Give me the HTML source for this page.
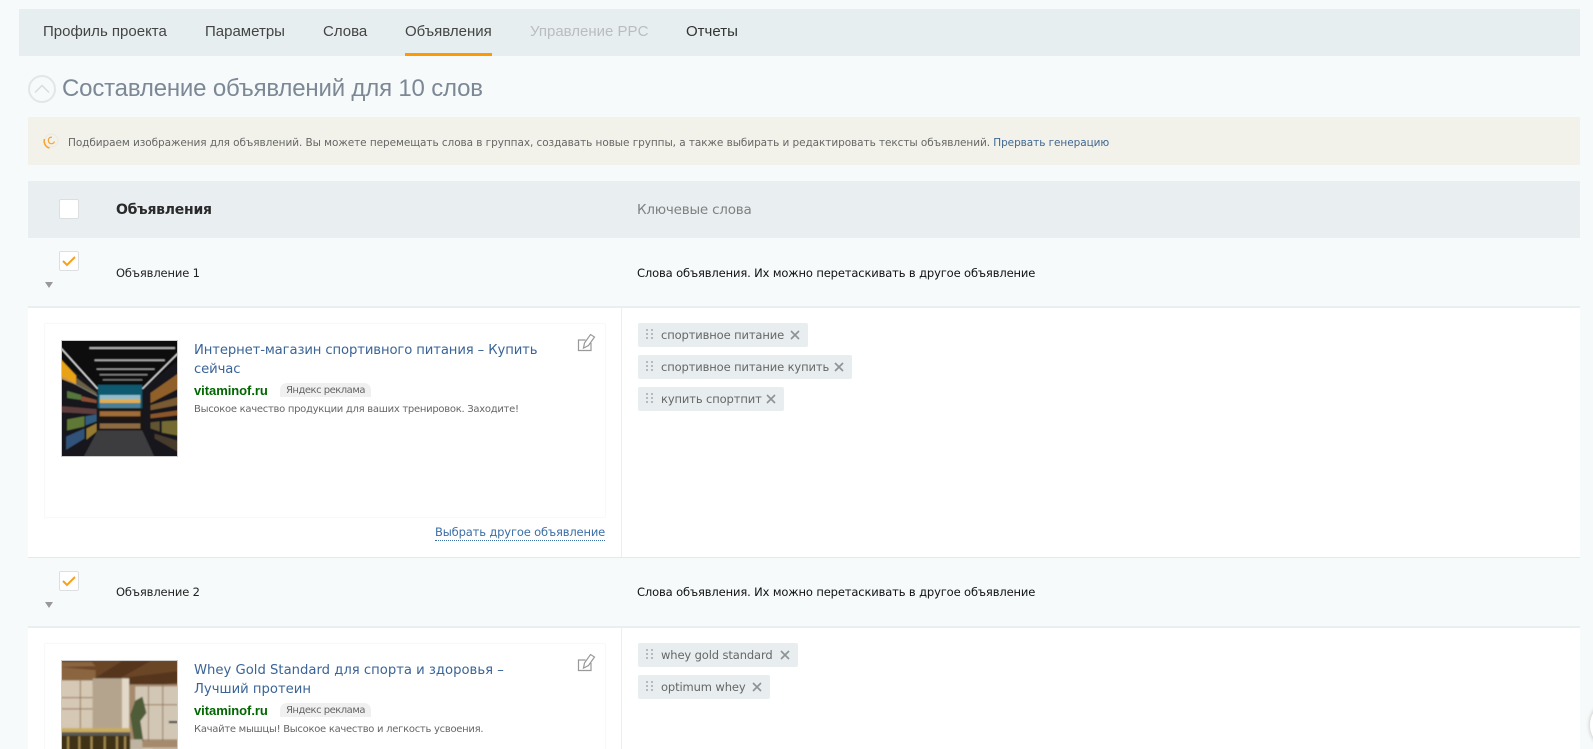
<!DOCTYPE html>
<html lang="ru"><head><meta charset="utf-8"><title>Объявления</title>
<style>
html,body{margin:0;padding:0;width:1593px;height:749px;overflow:hidden;background:#f6fafb}
body{position:relative;font-family:"DejaVu Sans",sans-serif}
.a{position:absolute;white-space:nowrap}
.box{position:absolute}
.nav{font:15px/20px "Liberation Sans",sans-serif;color:#444;top:22px}
.cb{position:absolute;left:59px;width:18px;height:18px;background:#fff;border:1px solid #dcdfe1;border-radius:2px}
.tri{position:absolute;left:45px;width:0;height:0;border-left:4px solid transparent;border-right:4px solid transparent;border-top:6px solid #999}
.tag{position:absolute;left:638px;height:24px;background:#e8eeef;border-radius:2px;font-size:11.5px;line-height:25px;color:#666;letter-spacing:-.12px}
.tag span{position:absolute;left:23px;white-space:nowrap}
.tag svg{position:absolute;left:8px;top:6px}
.tag svg.x{left:auto;right:8px;top:7px}
.t{font-size:13.2px;line-height:19px;color:#3a6496;left:194px;letter-spacing:-.11px}
.dom{font:bold 13px/14px "Liberation Sans",sans-serif;color:#060;left:194px;letter-spacing:-.05px}
.badge{position:absolute;left:280px;width:91px;height:14px;background:#f0f0f0;border-radius:7px 7px 0 0;font-size:10px;line-height:15px;color:#666;text-align:center;letter-spacing:-.5px;overflow:hidden}
.d{font-size:10px;line-height:13px;color:#666;left:194px;letter-spacing:-.28px}
.rowt{font-size:11.5px;line-height:14px;color:#222;letter-spacing:-.13px}
</style></head><body>

<div class="box" style="left:19px;top:9px;width:1561px;height:47px;background:#e7eeef"></div>
<div class="a nav" style="left:43px">Профиль проекта</div>
<div class="a nav" style="left:205px">Параметры</div>
<div class="a nav" style="left:323px">Слова</div>
<div class="a nav" style="left:405px">Объявления</div>
<div class="box" style="left:405px;top:53px;width:87px;height:3px;background:#f90"></div>
<div class="a nav" style="left:530px;color:#b9bdbf">Управление PPC</div>
<div class="a nav" style="left:686px;color:#333">Отчеты</div>

<svg class="box" style="left:28px;top:75px" width="28" height="28" viewBox="0 0 28 28"><circle cx="14" cy="14" r="13" fill="none" stroke="#e3e6e8" stroke-width="2"/><path d="M7 17.500 14 10.500 21 17.500" fill="none" stroke="#d9dcde" stroke-width="1.500"/></svg>
<div class="a" style="left:62px;top:74px;font:24px/30px 'Liberation Sans',sans-serif;color:#7d8895;letter-spacing:-.18px">Составление объявлений для 10 слов</div>

<div class="box" style="left:28px;top:117px;width:1552px;height:48px;background:#f3f2ea"></div>
<svg class="box" style="left:43px;top:133px" width="16" height="16" viewBox="0 0 16 16"><circle cx="8.500" cy="7.500" r="6.500" fill="none" stroke="#eceae2" stroke-width="1.200"/><path d="M1.500 6A7 7 0 0 0 6.500 15" fill="none" stroke="#f9a22e" stroke-width="1.500"/><circle cx="8.500" cy="7.500" r="3.200" fill="none" stroke="#f9a22e" stroke-width="1.200" stroke-dasharray="14 6" transform="rotate(20 8.500 7.500)"/></svg>
<div class="a" style="left:68px;top:136px;font-size:10.5px;line-height:14px;color:#666;letter-spacing:-.07px">Подбираем изображения для объявлений. Вы можете перемещать слова в группах, создавать новые группы, а также выбирать и редактировать тексты объявлений. <span style="color:#3f6790">Прервать генерацию</span></div>

<!-- table -->
<div class="box" style="left:28px;top:181px;width:1552px;height:57px;background:#e9eef0"></div>
<div class="cb" style="top:199px"></div>
<div class="a" style="left:116px;top:201px;font-size:14px;font-weight:bold;line-height:18px;color:#2a2a2a;letter-spacing:-.25px">Объявления</div>
<div class="a" style="left:637px;top:201px;font-size:13.5px;line-height:18px;color:#808080;letter-spacing:-.22px">Ключевые слова</div>

<div class="box" style="left:28px;top:308px;width:1552px;height:249px;background:#fff"></div>
<div class="box" style="left:28px;top:306px;width:1552px;height:2px;background:#e9eef0"></div>
<div class="box" style="left:621px;top:308px;width:1px;height:249px;background:#e9eef0"></div>
<div class="box" style="left:28px;top:557px;width:1552px;height:1px;background:#e4eaec"></div>
<div class="box" style="left:28px;top:628px;width:1552px;height:121px;background:#fff"></div>
<div class="box" style="left:28px;top:626px;width:1552px;height:2px;background:#e9eef0"></div>
<div class="box" style="left:621px;top:628px;width:1px;height:121px;background:#e9eef0"></div>

<!-- row 1 -->
<div class="cb" style="top:251px"><svg width="18" height="18" viewBox="0 0 18 18" style="display:block"><path d="M3 9 7 13 15 5" fill="none" stroke="#f9a01b" stroke-width="2"/></svg></div>
<div class="tri" style="top:282px"></div>
<div class="a rowt" style="left:116px;top:266px">Объявление 1</div>
<div class="a rowt" style="left:637px;top:266px;color:#111">Слова объявления. Их можно перетаскивать в другое объявление</div>

<div class="box" style="left:44px;top:323px;width:560px;height:193px;border:1px solid #f8f8f8;border-radius:2px;background:#fff"></div>
<svg class="box" style="left:61px;top:340px;outline:1px solid #ccc;outline-offset:-1px" width="117" height="117" viewBox="0 0 115 115">
<defs><filter id="b1" x="0" y="0" width="100%" height="100%"><feGaussianBlur stdDeviation=".6"/></filter></defs>
<g filter="url(#b1)">
<rect width="115" height="115" fill="#08090c"/>
<rect x="36" y="44" width="44" height="24" fill="#0b5a70"/>
<rect x="38" y="54" width="40" height="4" fill="#8fbccb"/><rect x="38" y="58" width="40" height="4" fill="#e0ad55"/><rect x="38" y="62" width="40" height="5" fill="#4c7f98"/>
<rect x="36" y="67" width="44" height="22" fill="#1a1412"/><rect x="38" y="70" width="40" height="5" fill="#a06c38"/><rect x="38" y="82" width="40" height="5" fill="#8c6a42"/>
<path d="M36 89H80L92 115H22Z" fill="#3c3d40"/>
<path d="M0 20 36 48V89L22 115H0Z" fill="#14151a"/>
<path d="M115 20 80 48V89L92 115H115Z" fill="#14151a"/>
<path d="M0 19 15 35V44L0 38Z" fill="#e9a117"/>
<g opacity=".72">
<path d="M15 37 35 52V55L15 44Z" fill="#8a7b52"/>
<path d="M6 50 20 54V59L6 57Z" fill="#6e9c4b"/><path d="M20 55 35 59V62L20 60Z" fill="#b9683f"/>
<path d="M0 65 35 68V73L0 71Z" fill="#7b4f4a"/>
<path d="M6 78 23 75V85L6 89Z" fill="#7d9f3e"/><path d="M24 75 35 73V80L24 84Z" fill="#3f79a6"/>
<path d="M5 95 23 87V97L5 108Z" fill="#3d6a9e"/><path d="M25 87 35 82V90L25 98Z" fill="#c9a13a"/>
<path d="M115 33 88 52V62L115 48Z" fill="#c27f33"/>
<path d="M115 56 88 64V69L115 64Z" fill="#a0753a"/>
<path d="M115 69 88 73V77L115 74Z" fill="#b96f2f"/>
<path d="M115 79 99 80V91L115 94Z" fill="#9a8c3a"/><path d="M97 80 88 81V87L97 90Z" fill="#7f6d3c"/>
<path d="M115 99 92 92V97L115 110Z" fill="#5b4a35"/>
</g>
<path d="M0 36 36 55" stroke="#8a8a8a" stroke-width=".7"/>
<path d="M0 8 36 48" stroke="#e6e6e6" stroke-width="1.300"/><path d="M115 13 80 48" stroke="#dcdcdc" stroke-width="1.300"/>
<rect x="28" y="7" width="84" height="1.800" fill="#b5b5b5"/><rect x="33" y="19" width="69" height="1.800" fill="#a8a8a8"/><rect x="35" y="28" width="57" height="1.300" fill="#a0a0a0"/><rect x="38" y="33.500" width="47" height="1.300" fill="#8a8a8a"/><rect x="41" y="38.500" width="39" height="1.300" fill="#7c7c7c"/>
</g></svg>
<div class="a t" style="top:341px">Интернет-магазин спортивного питания – Купить<br>сейчас</div>
<div class="a dom" style="top:384px">vitaminof.ru</div>
<div class="badge" style="top:383px">Яндекс реклама</div>
<div class="a d" style="top:403px">Высокое качество продукции для ваших тренировок. Заходите!</div>
<svg class="box" style="left:577px;top:332px" width="20" height="20" viewBox="0 0 20 20"><path d="M8.500 8H1.500V18.500H14V11" fill="none" stroke="#999" stroke-width="1.200"/><path d="M6.500 16 7.500 11 13.500 2.500 17.500 5 11.500 13.500Z" fill="#fff" stroke="#999" stroke-width="1.200"/></svg>
<div class="a" style="left:435px;top:525px;font-size:11.5px;line-height:15px;color:#3a6ea5;letter-spacing:-.15px;border-bottom:1px dotted #3a6ea5">Выбрать другое объявление</div>

<div class="tag" style="top:323px;width:170px"><svg width="8" height="12"><g fill="#b5babb"><rect width="2" height="2"/><rect x="5" width="2" height="2"/><rect y="4" width="2" height="2"/><rect x="5" y="4" width="2" height="2"/><rect y="8" width="2" height="2"/><rect x="5" y="8" width="2" height="2"/></g></svg><span>спортивное питание</span><svg class="x" width="10" height="10"><path d="M1 1 9 9M9 1 1 9" stroke="#8c9394" stroke-width="1.600"/></svg></div>
<div class="tag" style="top:355px;width:214px"><svg width="8" height="12"><g fill="#b5babb"><rect width="2" height="2"/><rect x="5" width="2" height="2"/><rect y="4" width="2" height="2"/><rect x="5" y="4" width="2" height="2"/><rect y="8" width="2" height="2"/><rect x="5" y="8" width="2" height="2"/></g></svg><span>спортивное питание купить</span><svg class="x" width="10" height="10"><path d="M1 1 9 9M9 1 1 9" stroke="#8c9394" stroke-width="1.600"/></svg></div>
<div class="tag" style="top:387px;width:146px"><svg width="8" height="12"><g fill="#b5babb"><rect width="2" height="2"/><rect x="5" width="2" height="2"/><rect y="4" width="2" height="2"/><rect x="5" y="4" width="2" height="2"/><rect y="8" width="2" height="2"/><rect x="5" y="8" width="2" height="2"/></g></svg><span>купить спортпит</span><svg class="x" width="10" height="10"><path d="M1 1 9 9M9 1 1 9" stroke="#8c9394" stroke-width="1.600"/></svg></div>

<!-- row 2 -->
<div class="cb" style="top:571px"><svg width="18" height="18" viewBox="0 0 18 18" style="display:block"><path d="M3 9 7 13 15 5" fill="none" stroke="#f9a01b" stroke-width="2"/></svg></div>
<div class="tri" style="top:602px"></div>
<div class="a rowt" style="left:116px;top:585px">Объявление 2</div>
<div class="a rowt" style="left:637px;top:585px;color:#111">Слова объявления. Их можно перетаскивать в другое объявление</div>

<div class="box" style="left:44px;top:643px;width:560px;height:120px;border:1px solid #f8f8f8;border-radius:2px;background:#fff"></div>
<svg class="box" style="left:61px;top:660px;outline:1px solid #ccc;outline-offset:-1px" width="117" height="117" viewBox="0 0 115 115">
<defs><filter id="b2" x="0" y="0" width="100%" height="100%"><feGaussianBlur stdDeviation=".8"/></filter></defs>
<g filter="url(#b2)">
<rect width="115" height="115" fill="#cdbba6"/>
<rect width="115" height="24" fill="#6a4427"/>
<path d="M0 2H30L34 6 0 7ZM0 7 34 10V20L0 20Z" fill="#8a6540"/>
<path d="M30 20 60 1H88L58 18 115 11V22L78 28 30 20Z" fill="#54361d"/>
<rect y="20" width="31" height="50" fill="#d5c8b4"/>
<rect x="31" y="18" width="30" height="52" fill="#b5a48d"/>
<rect x="60" y="18" width="7" height="60" fill="#e3d9c9"/>
<rect x="67" y="24" width="48" height="62" fill="#a58a6d"/>
<rect x="73" y="26" width="42" height="52" fill="#d2c7b5"/>
<path d="M0 37H31M0 48H31M19 20V70M73 44H115M86 26V80M100 24V80" stroke="#95795b" stroke-width="1"/>
<path d="M72 80 68 54 73 40 80 36 84 52 78 60 81 80Z" fill="#4f5b38"/>
<rect x="68" y="78" width="12" height="10" fill="#bfb3a1"/>
<rect y="67" width="68" height="5" fill="#c9ac5c"/><rect y="71" width="68" height="3" fill="#55575a"/>
<rect y="74" width="68" height="41" fill="#3f3017"/>
<path d="M7 75V115M18 75V115M30 75V115M43 75V115M55 75V115M63 75V115" stroke="#a58c50" stroke-width="2"/>
<rect x="68" y="88" width="47" height="27" fill="#e6dccb"/>
<rect x="90" y="88" width="25" height="8" fill="#2b2b2b"/><rect x="106" y="60" width="9" height="2" fill="#333"/>
</g></svg>
<div class="a t" style="top:661px;letter-spacing:0">Whey Gold Standard для спорта и здоровья –<br>Лучший протеин</div>
<div class="a dom" style="top:704px">vitaminof.ru</div>
<div class="badge" style="top:703px">Яндекс реклама</div>
<div class="a d" style="top:723px">Качайте мышцы! Высокое качество и легкость усвоения.</div>
<svg class="box" style="left:577px;top:652px" width="20" height="20" viewBox="0 0 20 20"><path d="M8.500 8H1.500V18.500H14V11" fill="none" stroke="#999" stroke-width="1.200"/><path d="M6.500 16 7.500 11 13.500 2.500 17.500 5 11.500 13.500Z" fill="#fff" stroke="#999" stroke-width="1.200"/></svg>

<div class="tag" style="top:643px;width:160px"><svg width="8" height="12"><g fill="#b5babb"><rect width="2" height="2"/><rect x="5" width="2" height="2"/><rect y="4" width="2" height="2"/><rect x="5" y="4" width="2" height="2"/><rect y="8" width="2" height="2"/><rect x="5" y="8" width="2" height="2"/></g></svg><span>whey gold standard</span><svg class="x" width="10" height="10"><path d="M1 1 9 9M9 1 1 9" stroke="#8c9394" stroke-width="1.600"/></svg></div>
<div class="tag" style="top:675px;width:132px"><svg width="8" height="12"><g fill="#b5babb"><rect width="2" height="2"/><rect x="5" width="2" height="2"/><rect y="4" width="2" height="2"/><rect x="5" y="4" width="2" height="2"/><rect y="8" width="2" height="2"/><rect x="5" y="8" width="2" height="2"/></g></svg><span>optimum whey</span><svg class="x" width="10" height="10"><path d="M1 1 9 9M9 1 1 9" stroke="#8c9394" stroke-width="1.600"/></svg></div>

<div class="box" style="left:1590px;top:700px;width:50px;height:50px;border-radius:50%;background:#fff;box-shadow:0 0 4px #bbb"></div>
</body></html>
